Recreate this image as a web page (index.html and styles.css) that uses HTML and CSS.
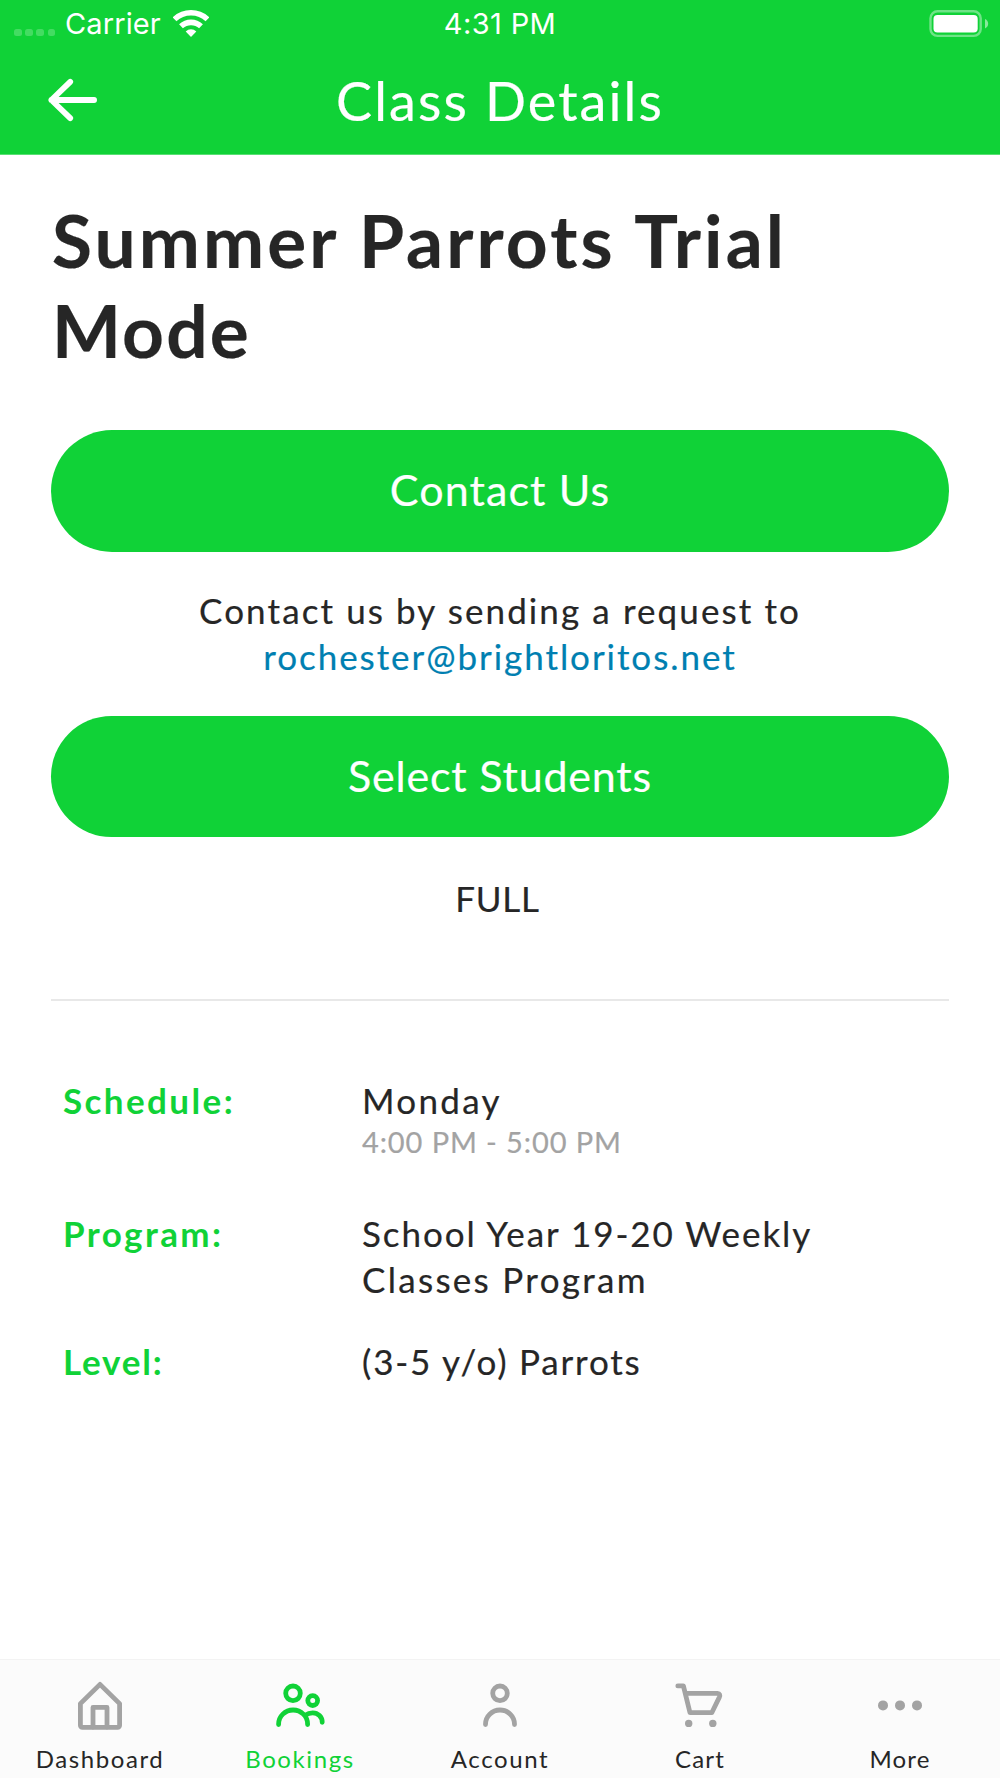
FILE: index.html
```html
<!DOCTYPE html>
<html lang="en">
<head>
  <meta charset="UTF-8"/>
  <meta name="viewport" content="width=device-width, initial-scale=1.0"/>
  <title>Class Details</title>
  <link rel="stylesheet" href="styles.css">
</head>
<body>
  <header class="header">
    <div class="status-bar">
      <div class="status-left">
        <div class="signal"><span></span><span></span><span></span><span></span></div>
        <span class="carrier">Carrier</span>
        <svg class="wifi" viewBox="0 0 36 27" width="36" height="27" fill="none" stroke="#fff" stroke-width="5.6">
          <path d="M1.5 9.3A24.2 24.2 0 0 1 34.5 9.3"/>
          <path d="M8 16.3A14.7 14.7 0 0 1 28 16.3"/>
          <path d="M18 27L12.7 21.4A7.7 7.7 0 0 1 23.3 21.4Z" fill="#fff" stroke="none"/>
        </svg>
      </div>
      <span class="time">4:31 PM</span>
      <div class="status-right">
        <svg viewBox="0 0 60 28" width="60" height="28">
          <rect x="1.5" y="1.3" width="50.2" height="24.6" rx="7" fill="none" stroke="#fff" stroke-opacity="0.4" stroke-width="2.4"/>
          <rect x="4.5" y="5" width="44.2" height="17.6" rx="4" fill="#fff"/>
          <path d="M56 9v9.4c4.2-1.8 4.2-7.6 0-9.4z" fill="#fff" fill-opacity="0.5"/>
        </svg>
      </div>
    </div>
    <div class="nav-bar">
      <a class="back" href="#" aria-label="Back">
        <svg viewBox="0 0 56 48" width="56" height="48" fill="none" stroke="#fff" stroke-width="5.8" stroke-linecap="round" stroke-linejoin="round">
          <path d="M25.2 5.8L6.4 24l18.8 18.2M6.4 24h42.7"/>
        </svg>
      </a>
      <span class="nav-title">Class Details</span>
    </div>
  </header>

  <main class="content">
    <h1>Summer Parrots Trial <span class="mode">Mode</span></h1>

    <button class="btn btn-contact">Contact Us</button>
    <p class="contact-info">Contact us by sending a request to<br/><a href="mailto:rochester@brightloritos.net">rochester@brightloritos.net</a></p>

    <button class="btn">Select Students</button>
    <p class="availability">FULL</p>

    <dl class="details">
      <dt>Schedule:</dt>
      <dd>Monday<span class="hours">4:00 PM - 5:00 PM</span></dd>
      <dt>Program:</dt>
      <dd><span class="year">School Year 19-20 Weekly</span> Classes Program</dd>
      <dt class="level">Level:</dt>
      <dd class="level">(3-5 y/o) Parrots</dd>
    </dl>
  </main>

  <nav class="tab-bar">
    <a class="tab" href="#">
      <svg class="icon" viewBox="0 0 60 60">
        <path d="M10.4 28.6L30 9.4l19.6 19.2V50.3a2 2 0 0 1-2 2H12.4a2 2 0 0 1-2-2z"/>
        <path d="M23 52V32.4h14V52"/>
      </svg>
      Dashboard
    </a>
    <a class="tab active" href="#">
      <svg class="icon" viewBox="0 0 60 60">
        <circle cx="23" cy="18.3" r="7.3"/>
        <path d="M8.6 49.6v-.4a14.5 14.2 0 0 1 29 0v.4"/>
        <circle cx="42.7" cy="25.6" r="4.9"/>
        <path d="M35.5 40.2c2-1.6 4.5-2.4 7.2-2.4a9.4 9.4 0 0 1 9.5 9.5"/>
      </svg>
      Bookings
    </a>
    <a class="tab" href="#">
      <svg class="icon" viewBox="0 0 60 60">
        <circle cx="30" cy="18.3" r="7.3"/>
        <path d="M15.5 49.6v-.4a14.5 14.2 0 0 1 29 0v.4"/>
      </svg>
      Account
    </a>
    <a class="tab short" href="#">
      <svg class="icon" viewBox="0 0 60 60">
        <path d="M7.8 10.9h5.6L20 37.7h21.8l7.6-15.6c.9-2 .2-3.8-1.8-3.8H16"/>
        <circle class="dot" cx="18.7" cy="48.4" r="3.7"/>
        <circle class="dot" cx="42.8" cy="48.4" r="3.7"/>
      </svg>
      Cart
    </a>
    <a class="tab short" href="#">
      <svg class="icon" viewBox="0 0 60 60">
        <circle class="dot" cx="13" cy="30.4" r="5"/>
        <circle class="dot" cx="30" cy="30.4" r="5"/>
        <circle class="dot" cx="47" cy="30.4" r="5"/>
      </svg>
      More
    </a>
  </nav>
</body>
</html>
```
FILE: styles.css
```css
:root {
  --green: #10d237;
  --text: #262626;
  --muted: #a3a3a3;
  --link: #007fb1;
}

* {
  box-sizing: border-box;
}

body {
  margin: 0;
  height: 1778px;
  display: flex;
  flex-direction: column;
  font-family: Lato, sans-serif;
  font-size: 35px;
  line-height: 46px;
  letter-spacing: 2.1px;
  color: var(--text);
  background: #fff;
  -webkit-text-stroke: 0.2px;
}

a {
  text-decoration: none;
}

/* header */
.header {
  height: 155px;
  background: var(--green);
  border-bottom: 1px solid #58e073;
  color: #fff;
}

.status-bar {
  height: 47px;
  padding: 0 11px 0 14px;
  display: grid;
  grid-template-columns: 1fr auto 1fr;
  align-items: center;
  font-family: Inter, sans-serif;
  font-size: 29px;
  letter-spacing: 0.1px;
  -webkit-text-stroke: 0;
}

.status-left {
  display: flex;
  align-items: center;
}

.signal {
  display: flex;
  gap: 3.7px;
  padding-top: 18px;
  margin-right: 10px;
}

.signal span {
  width: 7.5px;
  height: 7.5px;
  border-radius: 2.5px;
  background: rgba(255, 255, 255, 0.22);
}

.wifi {
  margin-left: 12px;
}

.time {
  letter-spacing: 0.4px;
  margin-right: 3px;
}

.status-right {
  display: flex;
  justify-content: flex-end;
}

.nav-bar {
  height: 106px;
  padding: 0 45px;
  display: grid;
  grid-template-columns: 56px 1fr 56px;
  align-items: center;
}

.back {
  display: flex;
}

.nav-title {
  font-size: 54px;
  letter-spacing: 2.1px;
  text-align: center;
  line-height: 64px;
  padding-top: 1px;
}

/* content */
.content {
  flex: 1;
  padding: 41px 51px 0;
}

h1 {
  margin: 0 0 55px;
  padding-left: 1px;
  font-size: 73px;
  line-height: 89.5px;
  letter-spacing: 3.1px;
}

.mode {
  letter-spacing: 2.2px;
}

.btn {
  display: block;
  width: 100%;
  height: 121.5px;
  padding: 0 0 2px;
  border: none;
  border-radius: 61px;
  background: var(--green);
  color: #fff;
  font-family: inherit;
  font-size: 43px;
  letter-spacing: 0.8px;
  -webkit-text-stroke: 0.2px;
}

.btn-contact {
  padding-bottom: 3px;
  letter-spacing: 1.1px;
}

.contact-info {
  margin: 35px 0 37px;
  text-align: center;
}

.contact-info a {
  color: var(--link);
  letter-spacing: 1.95px;
}

.availability {
  margin: 38px 0 78px;
  padding-right: 5px;
  text-align: center;
  letter-spacing: 0.7px;
}

.details {
  margin: 0;
  padding: 75.5px 0 0 12px;
  border-top: 2px solid #e8e8e8;
  display: grid;
  grid-template-columns: 299px 470px;
  row-gap: 36px;
}

.details dt {
  color: var(--green);
  font-weight: bold;
  letter-spacing: 2.4px;
  -webkit-text-stroke: 0;
}

.details dd {
  margin: 0;
  letter-spacing: 2.3px;
}

.hours {
  display: block;
  padding-top: 1px;
  margin-bottom: 14px;
  font-size: 29px;
  line-height: 36px;
  letter-spacing: 0.9px;
  color: var(--muted);
}

.year {
  letter-spacing: 1.95px;
}

.details .level {
  letter-spacing: 1.8px;
}

/* bottom tabs */
.tab-bar {
  height: 119px;
  padding-top: 15px;
  border-top: 1px solid #f3f3f3;
  background: #fbfbfb;
  display: grid;
  grid-template-columns: repeat(5, 1fr);
  -webkit-text-stroke: 0;
}

.tab {
  display: flex;
  flex-direction: column;
  align-items: center;
  gap: 9px;
  font-size: 24px;
  line-height: 30px;
  letter-spacing: 1.6px;
  color: var(--text);
}

.short {
  letter-spacing: 1.2px;
}

.active {
  color: var(--green);
}

.icon {
  width: 60px;
  height: 60px;
  fill: none;
  stroke: var(--muted);
  stroke-width: 4.8;
  stroke-linecap: round;
  stroke-linejoin: round;
}

.active .icon {
  stroke: var(--green);
}

.icon .dot {
  fill: var(--muted);
  stroke: none;
}
```
